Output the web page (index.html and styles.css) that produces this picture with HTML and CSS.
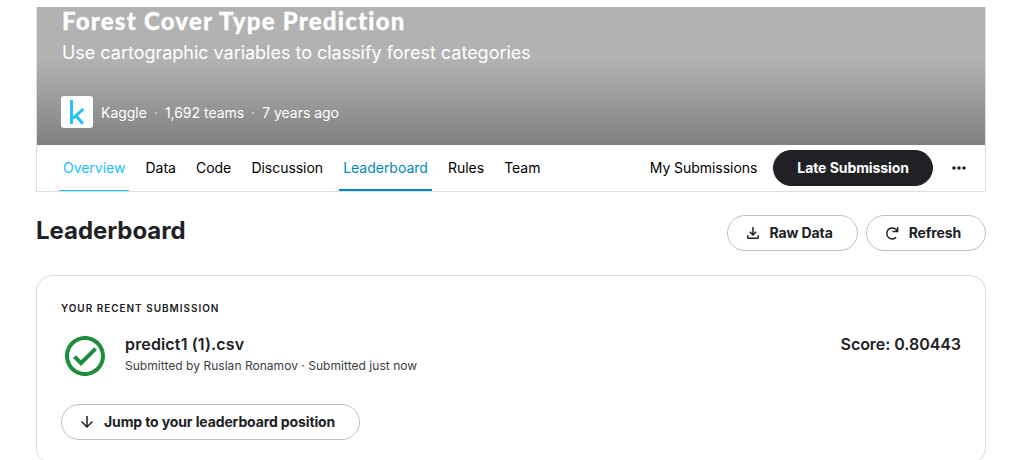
FILE: index.html
```html
<!DOCTYPE html>
<html lang="en">
<head>
<meta charset="utf-8">
<title>Forest Cover Type Prediction | Kaggle</title>
<link rel="stylesheet" href="styles.css">
</head>
<body>
<main class="page">
  <section class="competition">
    <header class="hero">
      <h1 class="hero-title">Forest Cover Type Prediction</h1>
      <p class="hero-subtitle">Use cartographic variables to classify forest categories</p>
      <div class="host">
        <span class="host-logo"><svg width="32" height="32" viewBox="0 0 32 32" fill="none" stroke="#20beff" stroke-width="2.9"><path d="M10.500 4v24M22.300 13L12 22.300M14.800 19.500L21.800 27.800"/></svg></span>
        <span class="host-name">Kaggle</span><span class="dot">·</span><span>1,692 teams</span><span class="dot">·</span><span>7 years ago</span>
      </div>
    </header>
    <nav class="tabs">
      <a class="tab tab-hover">Overview</a>
      <a class="tab">Data</a>
      <a class="tab">Code</a>
      <a class="tab">Discussion</a>
      <a class="tab tab-active">Leaderboard</a>
      <a class="tab">Rules</a>
      <a class="tab">Team</a>
      <div class="actions">
        <a class="my-submissions">My Submissions</a>
        <button class="button button-dark">Late Submission</button>
        <svg class="more" width="20" height="20" viewBox="0 0 20 20" fill="#202124"><circle cx="5" cy="10" r="1.8"/><circle cx="10" cy="10" r="1.8"/><circle cx="15" cy="10" r="1.8"/></svg>
      </div>
    </nav>
  </section>
  <div class="heading-row">
    <h2 class="heading">Leaderboard</h2>
    <button class="button"><svg class="icon" viewBox="0 0 24 24"><path d="M18 15v3H6v-3H4v3c0 1.100.9 2 2 2h12c1.100 0 2-.9 2-2v-3h-2zm-1-4l-1.410-1.410L13 12.170V4h-2v8.170L8.410 9.590 7 11l5 5 5-5z"/></svg>Raw Data</button>
    <button class="button"><svg class="icon" viewBox="0 0 24 24"><path fill="none" stroke="#202124" stroke-width="2" d="M17.500 17.800A7.300 7.300 0 1 1 17 7l2 2M19.500 4v6h-7"/></svg>Refresh</button>
  </div>
  <section class="card">
    <h3 class="card-label">Your recent submission</h3>
    <div class="submission">
      <svg class="status" width="48" height="48" viewBox="0 0 24 24" fill="#1e8e3e"><path d="M16.590 7.580L10 14.170l-2.590-2.580L6 13l4 4 8-8zM12 2C6.480 2 2 6.480 2 12s4.480 10 10 10 10-4.480 10-10S17.520 2 12 2zm0 18c-4.420 0-8-3.580-8-8s3.580-8 8-8 8 3.580 8 8-3.580 8-8 8z"/></svg>
      <div class="details">
        <div class="file">predict1 (1).csv</div>
        <div class="meta">Submitted by Ruslan Ronamov · Submitted just now</div>
      </div>
      <div class="score">Score: 0.80443</div>
    </div>
    <button class="button jump"><svg class="icon" viewBox="0 0 24 24"><path d="M20 12l-1.410-1.410L13 16.170V4h-2v12.170l-5.580-5.590L4 12l8 8 8-8z"/></svg>Jump to your leaderboard position</button>
  </section>
</main>
</body>
</html>
```
FILE: styles.css
```css
* { box-sizing: border-box; }
body {
  margin: 0;
  height: 460px;
  overflow: hidden;
  background: #fff;
  color: #202124;
  font-family: Inter, sans-serif;
}
h1, h2, h3, p { margin: 0; }
.page { width: 950px; margin-left: 36px; padding-top: 7px; }
.hero {
  height: 138px;
  margin: 0 1px;
  padding: 0 25px;
  color: #fff;
  background: linear-gradient(#b2b2b2 0, #b2b2b2 52px, #808080 138px);
}
.competition {
  height: 185px;
  background: linear-gradient(#dedfe0, #dedfe0) left / 1px 100% no-repeat, linear-gradient(#dedfe0, #dedfe0) right / 1px 100% no-repeat, linear-gradient(#dedfe0, #dedfe0) bottom / 100% 1px no-repeat;
}
.hero-title {
  height: 32px;
  font: 900 24px/27px Lato, sans-serif;
  letter-spacing: 1.22px;
  -webkit-text-stroke: 0.3px #fff;
  white-space: nowrap;
}
.hero-subtitle { font-size: 18px; line-height: 28px; letter-spacing: -0.02px; white-space: nowrap; }
.host {
  display: flex;
  align-items: flex-start;
  margin: 29px 0 0 -1px;
  font-size: 14px;
  line-height: 32px;
  letter-spacing: -0.02px;
}
.host span { padding-top: 1px; }
.host .host-logo { width: 32px; height: 32px; margin-right: 8px; padding: 0; border-radius: 3px; background: #fff; }
.host-logo svg { display: block; }
.dot { width: 18px; text-align: center; color: #ddd; }
.tabs { display: flex; height: 47px; padding: 0 17px 0 23px; }
.tab {
  height: 46px;
  padding: 0 4px;
  margin-right: 12.15px;
  color: #000;
  font-size: 14px;
  line-height: 46px;
  letter-spacing: -0.03px;
  white-space: nowrap;
}
.tab-hover { color: #20beff; border-bottom: 1px solid #20beff; }
.tab-active { color: #008abc; border-bottom: 2px solid #008abc; }
.actions { display: flex; align-items: center; height: 46px; margin-left: auto; }
.my-submissions { margin-right: 16px; padding-bottom: 2px; color: #000; font-size: 14px; letter-spacing: -0.05px; white-space: nowrap; }
.button {
  display: flex;
  align-items: center;
  height: 36px;
  padding: 0 24px 0 16px;
  border: 1px solid #bdc1c6;
  border-radius: 18px;
  background: #fff;
  color: #202124;
  font: 700 14px/20px Inter, sans-serif;
  letter-spacing: -0.12px;
  white-space: nowrap;
}
.button-dark { padding: 0 23px; border-color: #202124; background: #202124; color: #fff; letter-spacing: -0.07px; }
.more { margin-left: 16px; }
.icon { width: 18px; height: 18px; margin-right: 8px; fill: #202124; }
.heading-row { display: flex; align-items: flex-start; gap: 8px; height: 83px; padding-top: 23px; }
.heading { flex: 1; font-size: 24px; font-weight: 700; line-height: 32px; letter-spacing: -0.04px; }
.card { height: 189px; padding: 24px; border: 1px solid #dadce0; border-radius: 16px; }
.card-label {
  font-size: 10px;
  font-weight: 600;
  line-height: 16px;
  letter-spacing: 0.97px;
  text-transform: uppercase;
}
.submission { display: flex; height: 48px; margin-top: 16px; }
.details { flex: 1; margin-left: 16px; }
.file, .score { font-size: 16px; font-weight: 600; line-height: 24px; }
.file { letter-spacing: 0.15px; }
.score { letter-spacing: -0.05px; }
.meta { color: #3c4043; font-size: 12px; line-height: 20px; letter-spacing: 0.035px; }
.jump { margin-top: 24px; }
```
